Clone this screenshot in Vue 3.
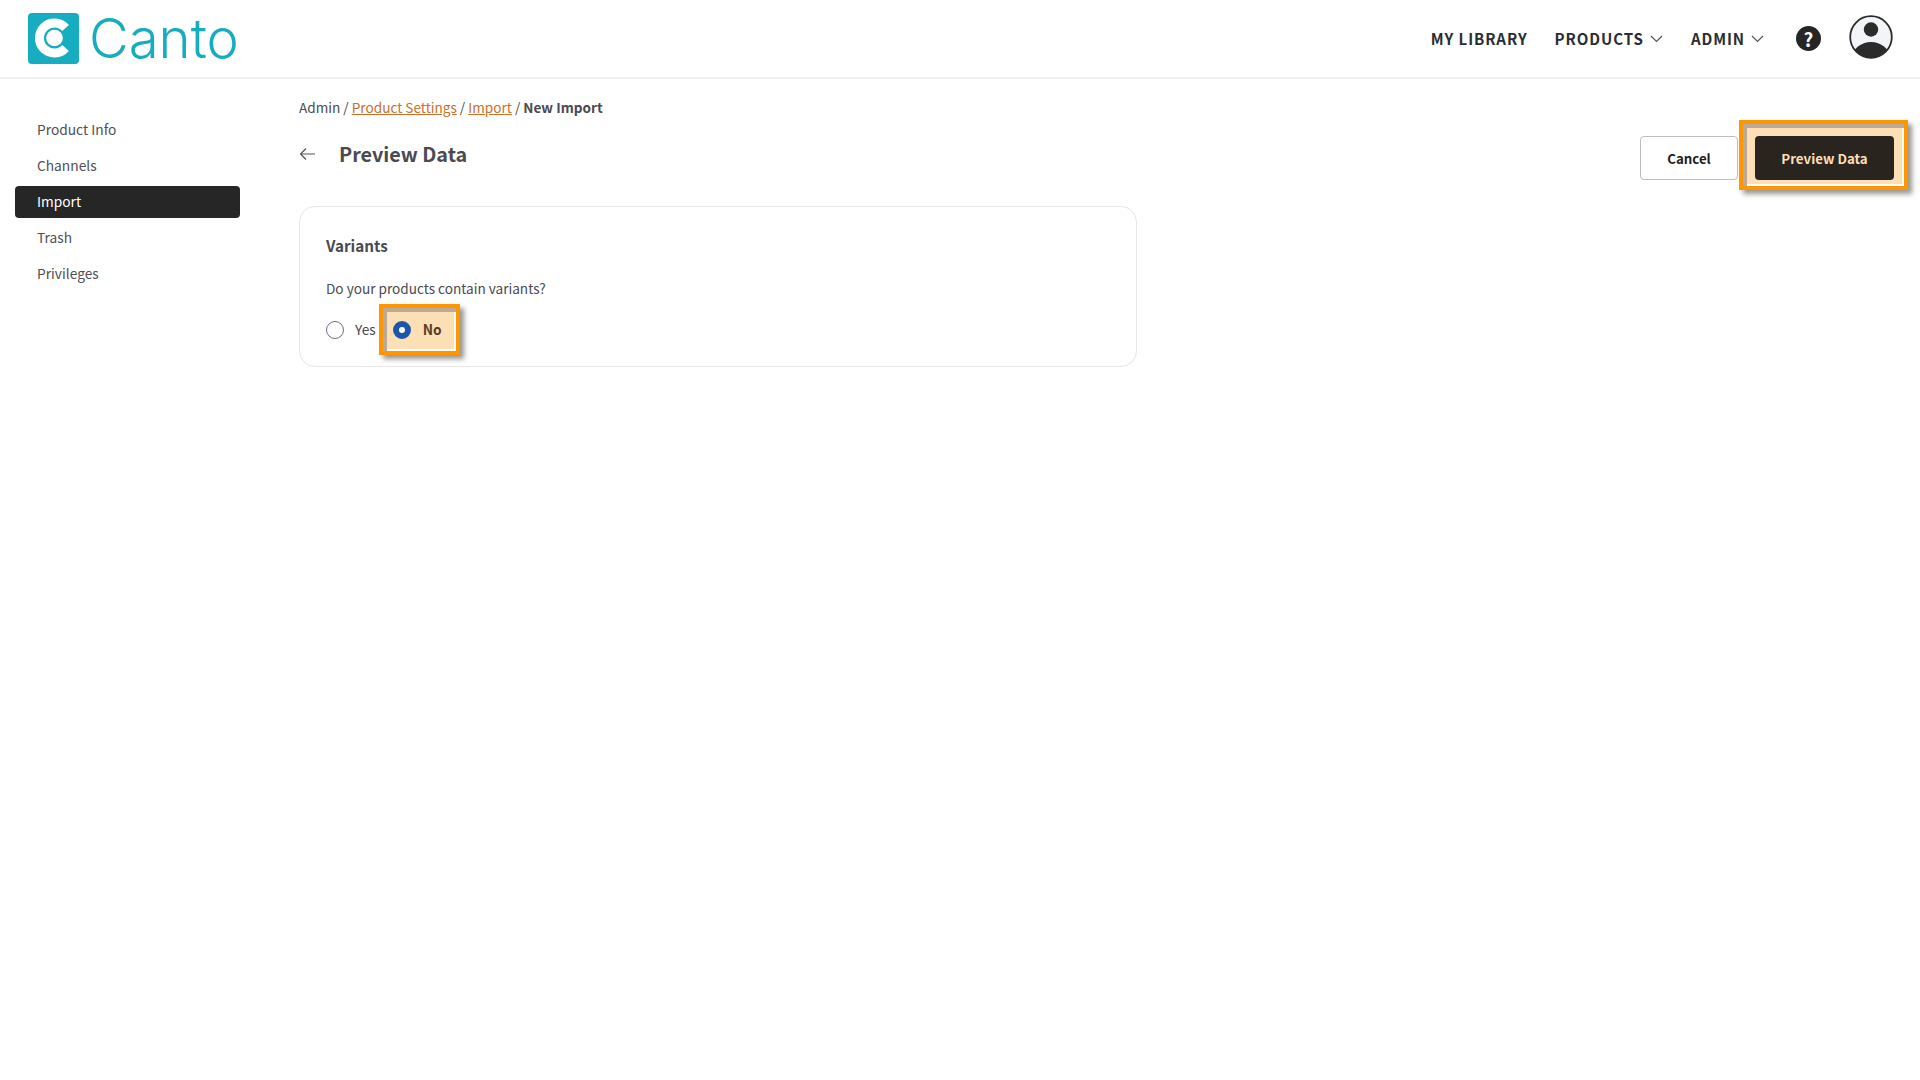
<script setup>
const sideItems = ['Product Info', 'Channels', 'Import', 'Trash', 'Privileges']
</script>

<template>
  <div class="page">
    <header class="topbar">
      <div class="brand">
        <svg class="brand-mark" width="51" height="51" viewBox="0 0 51 51">
          <rect width="51" height="51" rx="4" fill="#16adc0" />
          <path d="M37.6 15 A15 15 0 1 0 37.6 35" fill="none" stroke="#fff" stroke-width="9" />
          <circle cx="26.5" cy="25" r="8.3" fill="#fff" />
        </svg>
        <span class="brand-name">Canto</span>
      </div>
      <nav class="topnav">
        <a class="nav-link">MY LIBRARY</a>
        <a class="nav-link">PRODUCTS
          <svg class="chev" width="13" height="8" viewBox="0 0 13 8"><path d="M1 1l5.5 5.5L12 1" fill="none" stroke="#555" stroke-width="1.2" /></svg>
        </a>
        <a class="nav-link admin">ADMIN
          <svg class="chev" width="13" height="8" viewBox="0 0 13 8"><path d="M1 1l5.5 5.5L12 1" fill="none" stroke="#555" stroke-width="1.2" /></svg>
        </a>
        <span class="help">?</span>
        <svg class="avatar" width="44" height="44" viewBox="0 0 44 44">
          <defs>
            <clipPath id="avatar-clip"><circle cx="22" cy="22" r="20.5" /></clipPath>
          </defs>
          <circle cx="22" cy="22" r="20.8" fill="#f3f4f8" stroke="#2b2b2b" stroke-width="1.8" />
          <circle cx="22" cy="14.5" r="7.2" fill="#2b2b2b" />
          <ellipse cx="22" cy="42" rx="18.5" ry="15" fill="#2b2b2b" clip-path="url(#avatar-clip)" />
        </svg>
      </nav>
    </header>

    <div class="body">
      <aside class="sidebar">
        <a v-for="item in sideItems" :key="item" class="side-item" :class="{ active: item === 'Import' }">{{ item }}</a>
      </aside>

      <main class="content">
        <div class="crumbs">
          Admin / <a class="crumb-link">Product Settings</a> / <a class="crumb-link">Import</a> / <b>New Import</b>
        </div>

        <div class="title-row">
          <div class="title-left">
            <svg class="back" width="17" height="14" viewBox="0 0 17 14"><path d="M16 7H1.5M7 1.5L1.5 7 7 12.5" fill="none" stroke="#555" stroke-width="1.2" /></svg>
            <h1>Preview Data</h1>
          </div>
          <div class="actions">
            <button class="btn-cancel">Cancel</button>
            <div class="mark mark-btn">
              <button class="btn-primary">Preview Data</button>
            </div>
          </div>
        </div>

        <section class="card">
          <h2>Variants</h2>
          <p>Do your products contain variants?</p>
          <div class="radios">
            <label class="radio-yes"><span class="radio"></span>Yes</label>
            <div class="mark mark-radio">
              <label class="radio-no"><span class="radio on"></span>No</label>
            </div>
          </div>
        </section>
      </main>
    </div>
  </div>
</template>

<style scoped>
.page {
  min-height: 1080px;
  background: #fff;
  font-family: "Noto Sans CJK SC", "Noto Sans", sans-serif;
  color: #4a4a4f;
}
.topbar {
  height: 79px;
  box-sizing: border-box;
  border-bottom: 2px solid #efefef;
  display: flex;
  align-items: center;
  justify-content: space-between;
  padding: 0 27px 0 28px;
}
.brand {
  display: flex;
  align-items: center;
  gap: 10px;
}
.brand-mark {
  display: block;
}
.brand-name {
  font-family: Inter, sans-serif;
  font-weight: 300;
  font-size: 54.5px;
  line-height: 51px;
  color: #16adc0;
}
.topnav {
  display: flex;
  align-items: center;
}
.nav-link {
  display: flex;
  align-items: center;
  gap: 6px;
  margin-left: 27px;
  font-size: 15.1px;
  font-weight: 700;
  letter-spacing: 0.9px;
  color: #2a2d34;
  line-height: 19px;
}
.nav-link.admin {
  margin-left: 28px;
}
.help {
  width: 25px;
  height: 25px;
  margin-left: 32px;
  border-radius: 50%;
  background: #262626;
  color: #fff;
  font-size: 19px;
  font-weight: 700;
  line-height: 25px;
  text-align: center;
}
.avatar {
  display: block;
  margin-left: 28px;
  margin-top: -4px;
}
.body {
  display: flex;
}
.sidebar {
  width: 225px;
  margin-left: 15px;
  padding-top: 35px;
  display: flex;
  flex-direction: column;
  gap: 4px;
}
.side-item {
  height: 32px;
  padding-left: 22px;
  border-radius: 4px;
  font-size: 13.75px;
  line-height: 30px;
  color: #4f4f55;
}
.side-item.active {
  background: #262626;
  color: #fff;
}
.content {
  flex: 1;
  margin-left: 59px;
  padding: 17px 12px 0 0;
}
.crumbs {
  font-size: 13.6px;
  line-height: 22px;
  color: #4a4a4f;
}
.crumb-link {
  color: #c8702a;
  text-decoration: underline;
}
.crumbs b {
  font-weight: 700;
}
.title-row {
  display: flex;
  justify-content: space-between;
  align-items: flex-start;
  margin-top: 2px;
}
.title-left {
  display: flex;
  align-items: center;
  gap: 23px;
  padding-top: 20px;
}
.back {
  display: block;
}
h1 {
  margin: 0;
  font-size: 19.75px;
  font-weight: 700;
  line-height: 27px;
  color: #4a4a4f;
}
.actions {
  display: flex;
  align-items: flex-end;
}
.btn-cancel {
  width: 98px;
  height: 44px;
  margin: 0 1px 10px 0;
  background: #fff;
  border: 1px solid #bdbdbd;
  border-radius: 4px;
  font: 700 13.3px "Noto Sans CJK SC", sans-serif;
  color: #1e1e1e;
}
.mark {
  background: #fddfb6;
  border: 4px solid #ff9500;
  box-shadow: 4px 4px 5px rgba(80, 80, 70, 0.6), inset 4px 4px 0 #b8aa96, inset -2px -2px 0 #fff;
}
.mark-btn {
  padding: 12px 10px 6px 12px;
}
.btn-primary {
  display: block;
  width: 139px;
  height: 44px;
  background: #2a241f;
  border: 0;
  border-radius: 4px;
  font: 700 13.3px "Noto Sans CJK SC", sans-serif;
  color: #fddfb6;
}
.card {
  width: 838px;
  height: 161px;
  box-sizing: border-box;
  margin-top: 16px;
  padding: 26px 26px 0;
  border: 1px solid #e6e6e6;
  border-radius: 16px;
}
h2 {
  margin: 0;
  font-size: 15.25px;
  font-weight: 700;
  line-height: 24px;
  color: #4a4a4f;
}
.card p {
  margin: 20px 0 0;
  font-size: 13.6px;
  line-height: 22px;
  color: #4a4a4f;
}
.radios {
  display: flex;
  align-items: center;
  margin-top: 5px;
}
.radio-yes,
.radio-no {
  display: flex;
  align-items: center;
  font-size: 13.75px;
  line-height: 20px;
}
.radio-yes {
  margin-bottom: 2px;
}
.radio {
  width: 18px;
  height: 18px;
  box-sizing: border-box;
  margin: 2px 11px 0 0;
  border: 1px solid #6b7080;
  border-radius: 50%;
  background: #fff;
}
.radio.on {
  border: 6px solid #1c56a8;
  margin-right: 12px;
}
.mark-radio {
  margin-left: 3px;
  padding: 11px 14px 12px 10px;
}
.radio-no {
  font-weight: 700;
  color: #5a3d25;
}
</style>

<style>
body {
  margin: 0;
}
</style>
